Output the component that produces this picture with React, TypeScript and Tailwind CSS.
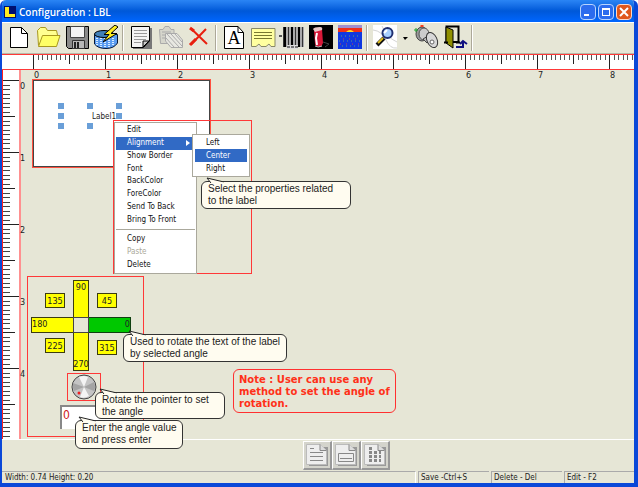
import React from "react";

type IconProps = { children: React.ReactNode; label: string; narrow?: boolean };

function Tool({ children, label, narrow }: IconProps) {
  return (
    <button type="button" aria-label={label} title={label} className={narrow ? "flex h-7 w-3 items-center justify-center" : "flex h-7 w-[29px] items-center justify-center"}>
      {children}
    </button>
  );
}

function Svg({ children, w = 26 }: { children: React.ReactNode; w?: number }) {
  return (
    <svg width={w} height="26" viewBox={`0 0 ${w} 26`} fill="none" stroke="#000" strokeWidth="1" className="shrink-0">
      {children}
    </svg>
  );
}

const Divider = () => <div className="mx-[2px] h-[26px] w-[2px] border-r border-l border-r-white border-l-[#aca899]" />;

const INCHES = [0, 1, 2, 3, 4, 5, 6, 7, 8];
const TICKS = Array.from({ length: 135 }, (_, i) => i);

function tickLength(i: number, full: number, half: number, minor: number) {
  return i % 16 === 0 ? full : i % 8 === 0 ? half : minor;
}

function TopRuler() {
  return (
    <div className="h-4 shrink-0 overflow-hidden border-y border-[#ff3838] bg-white">
      <svg width="640" height="14" className="block" shapeRendering="crispEdges">
        {TICKS.map((i) => (
          <rect key={i} x={31 + Math.round(i * 4.5)} y="0" width="1" height={tickLength(i, 14, 9, 5)} fill={i % 8 === 0 ? "#222" : "#555"} />
        ))}
      </svg>
    </div>
  );
}

function SideRuler() {
  return (
    <div className="w-[19px] shrink-0 overflow-hidden border-r-2 border-l border-r-[#ff9090] border-l-[#ff2020] bg-white">
      <svg width="16" height="369" className="block" shapeRendering="crispEdges">
        {TICKS.slice(0, 80).map((i) => (
          <rect key={i} x="0" y={10 + Math.round(i * 4.5)} width={tickLength(i, 16, 12, 7)} height="1" fill={i % 8 === 0 ? "#222" : "#444"} />
        ))}
      </svg>
    </div>
  );
}

function Callout({ place, lines, tail }: { place: string; lines: string[]; tail: string }) {
  return (
    <div className={`absolute rounded-md border border-[#333] bg-[#fffcf0] px-[6px] pt-px font-['Liberation_Sans',Arial,sans-serif] text-[10px] leading-3 text-[#222] ${place}`}>
      <svg width="22" height="6" className={`absolute -top-[5px] ${tail}`}>
        <path d="M5 6 L1 1 L18 5" fill="#fffcf0" stroke="#222" />
        <path d="M5 6 H18" stroke="#fffcf0" />
      </svg>
      {lines.map((l) => (
        <div key={l} className="whitespace-nowrap">{l}</div>
      ))}
    </div>
  );
}

function MenuItem({ text, active, disabled, arrow }: { text: string; active?: boolean; disabled?: boolean; arrow?: boolean }) {
  const tone = active ? "bg-[#316ac5] text-white" : disabled ? "text-[#aaa899]" : "text-[#111]";
  return (
    <button type="button" role="menuitem" disabled={disabled} className={`flex items-center justify-between pr-[5px] pl-[11px] text-left ${tone}`}>
      {text}
      {arrow && (
        <svg width="4" height="6"><path d="M0 0 L4 3 L0 6Z" fill="#fff" /></svg>
      )}
    </button>
  );
}

function Angle({ value, place }: { value: string; place: string }) {
  return (
    <button type="button" className={`absolute flex border border-[#3c3c10] bg-[#ffff00] ${place}`}>
      {value}
    </button>
  );
}

const HANDLES = [
  "left-[37px] top-[33px]", "left-[66px] top-[33px]", "left-[95px] top-[33px]",
  "left-[37px] top-[43px]", "left-[95px] top-[43px]",
  "left-[37px] top-[53px]", "left-[66px] top-[53px]",
];

const SHEETS = ["Text sheet", "Picture sheet", "Grid sheet"];

export default function App() {
  return (
    <div className="flex min-h-screen flex-col overflow-hidden rounded-t-md border-r-4 border-b-4 border-l-2 border-[#0a48d8] bg-[#e6e6d6] font-['DejaVu_Sans_Condensed','DejaVu_Sans',sans-serif] text-[9px] leading-3 text-[#222]">
      <header className="flex h-[22px] shrink-0 items-center bg-linear-to-b from-[#2a85f5] via-[#0058d8] to-[#0066ff] px-[2px] pt-[2px]">
        <svg width="12" height="12" shapeRendering="crispEdges">
          <path d="M0 0H12V12H0Z" fill="#001070" />
          <path d="M1 1H5V8H11V11H1Z" fill="#ffec20" />
        </svg>
        <h1 className="flex-1 pl-[3px] font-['Open_Sans','Noto_Sans',sans-serif] text-[10px] font-semibold text-white">Configuration : LBL</h1>
        <div className="flex gap-[2px]">
          <button type="button" aria-label="Minimize" className="flex size-4 items-end rounded-sm border border-[#b8d4ff] bg-[#2c6cee] p-[3px]"><span className="h-[2px] w-[5px] bg-white" /></button>
          <button type="button" aria-label="Maximize" className="flex size-4 items-center justify-center rounded-sm border border-[#b8d4ff] bg-[#2c6cee]"><span className="size-2 border border-t-2 border-white" /></button>
          <button type="button" aria-label="Close" className="flex size-4 items-center justify-center rounded-sm border border-[#ffd8c8] bg-[#e0571c]">
            <svg width="10" height="10"><path d="M1 1 L9 9 M9 1 L1 9" stroke="#fff" strokeWidth="2" /></svg>
          </button>
        </div>
      </header>

      <nav aria-label="Tools" className="flex h-8 shrink-0 items-center border-t border-b border-t-white border-b-[#b8b8a8] pl-[2px]">
        <Tool label="New"><Svg><path d="M4.500 2.500H15.500L21.500 8.500V22.500H4.500Z" fill="#fff" /><path d="M15.500 2.500V8.500H21.500" /></Svg></Tool>
        <Tool label="Open"><Svg><path d="M3.500 20.500L2.500 5.500L5.500 2.500H10.500L12.500 5.500H21.500L22.500 10" fill="#ffff90" stroke="#a89820" /><path d="M3.500 21.500L7.500 10.500H25L21.500 21.500Z" fill="#ffff66" stroke="#a89820" /></Svg></Tool>
        <Tool label="Save"><Svg><path d="M2.500 1.500H24.500V23.500H4.500L2.500 21.500Z" fill="#8a8a8a" /><path d="M6.500 1.500H20.500V12.500H6.500Z" fill="#f4f4f4" stroke="#444" /><path d="M8.500 15.500H20.500V23.500H8.500Z" fill="#b8b8b8" stroke="#333" /><path d="M11 17V23M14 17V23" strokeWidth="2" stroke="#222" /></Svg></Tool>
        <Tool label="Save data"><Svg><path d="M1.500 9.500V19Q5 23.500 13 23.500T24.500 18V9.500Z" fill="#5a9cf0" stroke="#051838" /><path d="M4 13V21M8 13V23M12 13V23M16 13V23M20 13V21" stroke="#d8ecff" strokeDasharray="1 1" strokeWidth="2" /><ellipse cx="11" cy="9" rx="9.500" ry="3.500" fill="#4080b8" /><path d="M22 0L11 9.500H16L10 17L24 8.500H18L25 2Z" fill="#ffed20" /></Svg></Tool>
        <Divider />
        <Tool label="Copy"><Svg><path d="M5 3H24V24H5Z" fill="#777" stroke="none" /><path d="M3.500 1.500H21.500V16L15.500 22.500H3.500Z" fill="#f4f4f4" /><path d="M6 5.500H19M6 8.500H19M6 11.500H19M6 14.500H18M6 17.500H13" stroke="#999" /><path d="M21 16H15V22Z" fill="#ccc" /></Svg></Tool>
        <Tool label="Paste"><Svg><path d="M2.500 4.500H6L8 1.500H12L14 4.500H17V18.500H3.500Z" fill="#d6d6cc" stroke="#aaa" /><path d="M5 7H14M5 10H10M5 13H9" stroke="#aaa" /><path d="M8.500 8.500H20L25.500 15V22.500H14L8.500 16Z" fill="#e8e8e2" stroke="#aaa" /><path d="M10 9L22 22M14 9L25 21M18 9L25 17M9 13L17 22" stroke="#aaa" /></Svg></Tool>
        <Tool label="Delete"><Svg><path d="M5 3.500L21 19M20 4L5.500 19" stroke="#e82010" strokeWidth="2" /><path d="M4 3L8 6M10 14L4 20" stroke="#e82010" strokeWidth="3" /></Svg></Tool>
        <Divider />
        <Tool label="Text"><Svg><path d="M3.500 1.500H17L22.500 7.500V23.500H3.500Z" fill="#fff" /><path d="M17 1.500V7.500H22.500" /><text x="13" y="19" textAnchor="middle" fill="#000" stroke="none" className="font-['Liberation_Serif',serif] text-[18px]">A</text></Svg></Tool>
        <Tool label="Label"><Svg><path d="M1.500 3.500H25V21.500H21L19 19L16 21.500H11L9 19L6 21.500H1.500Z" fill="#ffffa0" stroke="#888868" /><path d="M4 7.500H22M4 10.500H22M4 13.500H22" stroke="#777730" /></Svg></Tool>
        <Tool label="Barcode"><Svg><path d="M4 2H25V22H4Z" fill="#aaa" stroke="none" /><path d="M6 2V22M13 2V20M20 2V22" strokeWidth="2" /><path d="M4.500 2V22M9.500 2V20M16.500 2V20M23.500 2V22" stroke="#333" /><path d="M8 20H19V24H8Z" fill="#ddd" stroke="none" /><path d="M8 22H11M12 22H15M16 22H19" stroke="#777" strokeWidth="2" /><path d="M0 11H3" stroke="#555" strokeWidth="2" /></Svg></Tool>
        <Tool label="Picture"><Svg><path d="M1 0H25V24H1Z" fill="#000" stroke="none" /><path d="M6 6L7 19Q7 22 13 22L15 18L14 4Z" fill="#d81838" stroke="none" /><path d="M5 4Q6 2 12 2Q15 2 14 5L7 7Z" fill="#e8c8c8" stroke="none" /><path d="M9 8L8 13L9 20" stroke="#fff" strokeWidth="2" /><path d="M7 21Q10 23 14 21" stroke="#bbb" /><path d="M15 17L21 19L17 22" stroke="#444" /></Svg></Tool>
        <Tool label="Background"><Svg><path d="M1 0H25V24H1Z" fill="#1038e0" stroke="none" /><path d="M1 0H25V3H1Z" fill="#a090d0" stroke="none" /><path d="M1 3H25V7H1Z" fill="#f03018" stroke="none" /><path d="M9 7Q13 3 17 7Z" fill="#ffe020" stroke="none" /><path d="M4 11H22M2 16H24M5 21H22" stroke="#60a080" strokeDasharray="1 3" /><path d="M6 14H22M3 19H22" stroke="#c04060" strokeDasharray="1 5" /></Svg></Tool>
        <Divider />
        <Tool label="Preview"><Svg><path d="M1 0H25V24H1Z" fill="#fff" stroke="none" /><path d="M1 5Q10 6 14 15T25 23M10 1Q14 12 25 17" stroke="#d4d4d4" /><path d="M12 13L5 20" stroke="#111" strokeWidth="4" /><path d="M11 13L6 18" stroke="#e0c020" strokeWidth="2" /><circle cx="15.500" cy="8" r="5" fill="#a8d0ff" stroke="#203070" strokeWidth="2" /><path d="M12 8L15 5" stroke="#fff" strokeWidth="2" /></Svg></Tool>
        <Tool label="Preview options" narrow><svg width="5" height="3"><path d="M0 0H5L2 3Z" fill="#000" /></svg></Tool>
        <Tool label="Key"><Svg><ellipse cx="9" cy="9" rx="6" ry="7" fill="#999" stroke="#444" /><ellipse cx="11" cy="9" rx="5" ry="6" fill="#ccc" stroke="#555" /><path d="M10 14L15 11L18 15L14 18Z" fill="#bbb" stroke="#444" /><ellipse cx="19" cy="15" rx="5" ry="8" transform="rotate(-25 19 15)" fill="#d8d8d8" stroke="#333" /><circle cx="19" cy="17" r="2" fill="#fff" stroke="#666" /><path d="M1 5H5M3 3V7" stroke="#20a030" /><path d="M9 0V2" stroke="#f04020" strokeWidth="3" /></Svg></Tool>
        <Tool label="Exit"><Svg><path d="M4.500 1.500H16.500V17H4.500Z" fill="#e6e6d6" strokeWidth="2" /><path d="M4 2L11 5V23L4 18Z" fill="#909000" /><path d="M2 17.500H6M14 17.500H18" strokeWidth="2" /><path d="M14 22H21V17M18 19L21 16L25 19" stroke="#101080" strokeWidth="2" /></Svg></Tool>
        <Divider />
      </nav>

      <TopRuler />

      <main className="relative z-10 flex flex-1">
        <SideRuler />
        <section aria-label="Design surface" className="relative flex-1">
          {INCHES.map((n) => (
            <span key={n} className="absolute top-0 leading-[10px]" style={{ left: 13 + n * 72 }}>{n}</span>
          ))}
          {INCHES.slice(0, 5).map((n) => (
            <span key={n} className="absolute -left-px leading-[10px]" style={{ top: 11 + n * 72 }}>{n}</span>
          ))}

          <div className="absolute top-[9px] left-[11px] h-[89px] w-[179px] border border-[#ff5040] bg-white">
            <div className="h-full border border-[#444]" />
          </div>
          <span className="absolute top-[41px] left-[71px] text-[8px]">Label1</span>
          {HANDLES.map((h) => (
            <i key={h} className={`absolute size-[6px] bg-[#6a9fd8] ${h}`} />
          ))}

          <div className="absolute top-[50px] left-[92px] h-[154px] w-[139px] border border-[#ff3838]" />
          <div role="menu" aria-label="Label" className="absolute top-[52px] left-[93px] w-[83px] border border-[#aaa89c] bg-white p-px pb-[2px] text-[8px]">
            <div className="grid h-[102px] grid-rows-8">
              <MenuItem text="Edit" />
              <MenuItem text="Alignment" active arrow />
              <MenuItem text="Show Border" />
              <MenuItem text="Font" />
              <MenuItem text="BackColor" />
              <MenuItem text="ForeColor" />
              <MenuItem text="Send To Back" />
              <MenuItem text="Bring To Front" />
            </div>
            <hr className="my-[3px] border-[#aaa89c]" />
            <div className="grid h-[38px] grid-rows-3">
              <MenuItem text="Copy" />
              <MenuItem text="Paste" disabled />
              <MenuItem text="Delete" />
            </div>
          </div>
          <div role="menu" aria-label="Alignment" className="absolute top-[64px] left-[171px] grid h-[43px] w-[58px] grid-rows-3 border border-[#aaa89c] bg-white px-[2px] py-px text-[8px]">
            <MenuItem text="Left" />
            <MenuItem text="Center" active />
            <MenuItem text="Right" />
          </div>

          <div className="absolute top-[206px] left-[6px] h-[161px] w-[117px] border border-[#ff3838]" />
          <Angle value="90" place="top-[210px] left-[52px] h-[38px] w-4 items-start justify-center" />
          <Angle value="270" place="top-[262px] left-[52px] h-[39px] w-4 items-end justify-center" />
          <Angle value="180" place="top-[247px] left-[10px] h-4 w-[43px] items-start justify-start" />
          <button type="button" className="absolute top-[247px] left-[67px] flex h-4 w-[43px] items-start justify-end border border-[#104010] bg-[#00c800]">0</button>
          <i className="absolute top-[247px] left-[52px] h-4 w-4 border border-[#444] bg-[#e6e6d6]" />
          <Angle value="135" place="top-[223px] left-[24px] h-[15px] w-5 items-center justify-center" />
          <Angle value="45" place="top-[223px] left-[76px] h-[15px] w-5 items-center justify-center" />
          <Angle value="225" place="top-[268px] left-[24px] h-[15px] w-5 items-center justify-center" />
          <Angle value="315" place="top-[270px] left-[76px] h-[15px] w-5 items-center justify-center" />

          <div className="absolute top-[303px] left-[46px] flex h-7 w-[34px] items-center justify-center border border-[#ff3838]">
            <svg width="26" height="26">
              <circle cx="13" cy="13" r="12" fill="#c4c4c4" stroke="#444" />
              <path d="M13 13L8 3Q13 1 17 3ZM13 13L9 23Q13 25 18 22Z" fill="#f4f4f4" />
              <path d="M13 13L2 9Q1 13 3 17ZM13 13L23 8Q25 13 23 17Z" fill="#a4a4a4" />
              <circle cx="8" cy="19" r="1.500" fill="#f02020" />
            </svg>
          </div>
          <input aria-label="Angle" defaultValue="0" className="absolute top-[335px] left-[39px] h-6 w-[62px] border-t-2 border-l-2 border-[#888] bg-white pb-[6px] pl-px font-['DejaVu_Sans_Condensed',sans-serif] text-[12px] text-[#d02020]" />

          <Callout place="top-[111px] left-[180px] h-[28px] w-[150px]" tail="left-[4px]" lines={["Select the properties related", "to the label"]} />
          <Callout place="top-[264px] left-[102px] h-[28px] w-[164px]" tail="left-[4px]" lines={["Used to rotate the text of the label", "by selected angle"]} />
          <Callout place="top-[322px] left-[74px] h-[27px] w-[130px]" tail="left-[3px]" lines={["Rotate the pointer to set", "the angle"]} />
          <Callout place="top-[350px] left-[54px] h-[29px] w-[108px]" tail="left-[2px]" lines={["Enter the angle value", "and press enter"]} />

          <p className="absolute top-[299px] left-[212px] h-[44px] w-[163px] rounded-md border border-[#ff3030] px-[5px] py-1 font-['DejaVu_Sans',Verdana,sans-serif] text-[10px] leading-3 font-bold whitespace-nowrap text-[#ff3018]">
            Note : User can use any<br />method to set the angle of<br />rotation.
          </p>
        </section>
      </main>

      <div className="flex h-8 shrink-0 items-center justify-center border-t border-white pl-14">
        {SHEETS.map((name, i) => (
          <button key={name} type="button" aria-label={name} className="flex size-[29px] items-center justify-center border-t border-r-2 border-b-2 border-l border-t-white border-r-[#999] border-b-[#999] border-l-white bg-[#d4d4cc]">
            <svg width="24" height="24" fill="none" stroke="#888">
              <path d="M4 4H23V23H4Z" fill="#999" stroke="none" />
              <path d="M1.500 1.500H15L21.500 7.500V21.500H1.500Z" fill="#eee" stroke="#bbb" />
              <path d="M15 1.500V7.500H21.500" fill="#ddd" />
              {i === 0 && <path d="M5 5.500H9M5 9.500H18M5 13.500H18M5 17.500H18" />}
              {i === 1 && <path d="M4.500 10.500H19.500V18.500H4.500ZM6 15.500H18" />}
              {i === 2 && <path d="M6 5.500H9M6 9.500H18M6 13.500H18M6 17.500H18" strokeWidth="3" strokeDasharray="3 2" />}
            </svg>
          </button>
        ))}
      </div>

      <footer className="flex h-3 shrink-0 gap-[2px] text-[8px] leading-3">
        <div className="flex-1 border-t border-r border-[#aaa] border-r-white pl-[3px]">Width: 0.74 Height: 0.20</div>
        <div className="w-[71px] border-t border-l border-[#aaa] pl-[2px]">Save -Ctrl+S</div>
        <div className="w-[71px] border-t border-l border-[#aaa] pl-[2px]">Delete - Del</div>
        <div className="w-[70px] border-t border-l border-[#aaa] pl-[2px]">Edit - F2</div>
      </footer>
    </div>
  );
}
